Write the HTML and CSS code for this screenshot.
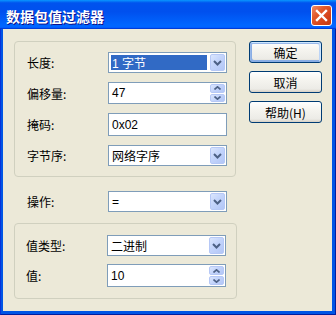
FILE: index.html
```html
<!DOCTYPE html>
<html lang="zh-CN">
<head>
    <meta charset="UTF-8">
    <title>数据包值过滤器</title>
    <link rel="stylesheet" href="styles.css">
</head>
<body>
    <div class="window">
        <div class="titlebar">
            <span class="title">数据包值过滤器</span>
            <div class="close">
                <svg width="13" height="13" viewBox="0 0 13 13"><path d="M2 2L11 11M11 2L2 11" stroke="#fff" stroke-width="2.4" stroke-linecap="square"/></svg>
            </div>
        </div>
        <div class="client">
            <div class="left">
                <div class="group g1">
                    <div class="row">
                        <span class="label">长度:</span>
                        <div class="field combo">
                            <span class="value sel">1 字节</span>
                            <span class="drop"><svg width="9" height="6" viewBox="0 0 9 6"><path d="M1 1L4.5 4.5L8 1" fill="none" stroke="#4d6185" stroke-width="2"/></svg></span>
                        </div>
                    </div>
                    <div class="row">
                        <span class="label">偏移量:</span>
                        <div class="field spin">
                            <span class="value">47</span>
                            <span class="arrows">
                                <span class="up"><svg width="7" height="4" viewBox="0 0 7 4"><path d="M0.5 3.5L3.5 0.8L6.5 3.5" fill="none" stroke="#4d6185" stroke-width="1.6"/></svg></span>
                                <span class="down"><svg width="7" height="4" viewBox="0 0 7 4"><path d="M0.5 0.5L3.5 3.2L6.5 0.5" fill="none" stroke="#4d6185" stroke-width="1.6"/></svg></span>
                            </span>
                        </div>
                    </div>
                    <div class="row">
                        <span class="label">掩码:</span>
                        <div class="field edit">
                            <span class="value">0x02</span>
                        </div>
                    </div>
                    <div class="row">
                        <span class="label">字节序:</span>
                        <div class="field combo">
                            <span class="value">网络字序</span>
                            <span class="drop"><svg width="9" height="6" viewBox="0 0 9 6"><path d="M1 1L4.5 4.5L8 1" fill="none" stroke="#4d6185" stroke-width="2"/></svg></span>
                        </div>
                    </div>
                </div>

                <div class="row op">
                    <span class="label">操作:</span>
                    <div class="field combo">
                        <span class="value">=</span>
                        <span class="drop"><svg width="9" height="6" viewBox="0 0 9 6"><path d="M1 1L4.5 4.5L8 1" fill="none" stroke="#4d6185" stroke-width="2"/></svg></span>
                    </div>
                </div>

                <div class="group g2">
                    <div class="row">
                        <span class="label">值类型:</span>
                        <div class="field combo">
                            <span class="value">二进制</span>
                            <span class="drop"><svg width="9" height="6" viewBox="0 0 9 6"><path d="M1 1L4.5 4.5L8 1" fill="none" stroke="#4d6185" stroke-width="2"/></svg></span>
                        </div>
                    </div>
                    <div class="row">
                        <span class="label">值:</span>
                        <div class="field spin tall">
                            <span class="value">10</span>
                            <span class="arrows">
                                <span class="up"><svg width="7" height="4" viewBox="0 0 7 4"><path d="M0.5 3.5L3.5 0.8L6.5 3.5" fill="none" stroke="#4d6185" stroke-width="1.6"/></svg></span>
                                <span class="down"><svg width="7" height="4" viewBox="0 0 7 4"><path d="M0.5 0.5L3.5 3.2L6.5 0.5" fill="none" stroke="#4d6185" stroke-width="1.6"/></svg></span>
                            </span>
                        </div>
                    </div>
                </div>
            </div>

            <div class="buttons">
                <div class="btn default">确定</div>
                <div class="btn">取消</div>
                <div class="btn">帮助(H)</div>
            </div>
        </div>
    </div>
</body>
</html>
```

FILE: styles.css
```css
* {
    box-sizing: border-box;
}

body {
    margin: 0;
    font-family: "Liberation Sans", "Noto Sans CJK SC", sans-serif;
    font-size: 12px;
    background: #ece9d8;
}

.window {
    width: 336px;
    height: 315px;
    background: #0055e5;
    border-left: 1px solid #0831d9;
    border-right: 1px solid #001ea0;
    border-bottom: 1px solid #001ea0;
    display: flex;
    flex-direction: column;
}

.titlebar {
    height: 29px;
    padding: 2px 4px 0 6px;
    display: flex;
    align-items: center;
    justify-content: space-between;
    background: linear-gradient(180deg, #0997ff 0%, #0053ee 10%, #0050ee 40%, #0066ff 86%, #0066ff 92%, #005bff 95%, #003dd7 97%, #003dd7 100%);
    margin: 0 -1px;
}

.title {
    color: #fff;
    font-family: "Noto Sans CJK SC", sans-serif;
    font-weight: bold;
    font-size: 14px;
    letter-spacing: 0px;
    text-shadow: 1px 1px #0f1089;
}

.close {
    width: 21px;
    height: 21px;
    border: 1px solid #fff;
    border-radius: 3px;
    background: radial-gradient(circle at 90% 90%, #cc4600 0%, #dc6527 55%, #cd7546 70%, #ffccb2 90%, #fff 100%);
    background: linear-gradient(135deg, #f08b6a 0%, #e25a2c 35%, #d4421a 70%, #c13a14 100%);
    display: flex;
    align-items: center;
    justify-content: center;
}

.client {
    flex: 1;
    margin: 0 3px 3px 2px;
    background: #ece9d8;
    padding: 12px 0 0 11px;
    display: flex;
    gap: 12px;
}

.left {
    width: 223px;
}

.group {
    border: 1px solid #d0d0bf;
    border-radius: 4px;
    display: flex;
    flex-direction: column;
}

.g1 {
    width: 222px;
    padding: 10px 8px 10px 12px;
    gap: 9px;
}

.g2 {
    width: 223px;
    padding: 11px 10px 11px 11px;
    gap: 8px;
}

.row {
    display: flex;
    align-items: center;
}

.label {
    width: 81px;
    flex: none;
    font-family: "Noto Sans CJK SC", sans-serif;
    font-size: 12px;
    color: #000;
}

.op {
    margin: 14px 0 11px;
    padding-left: 13px;
}

.field {
    width: 119px;
    height: 21px;
    border: 1px solid #7f9db9;
    background: #fff;
    display: flex;
    align-items: stretch;
    padding: 1px;
    position: relative;
}

.field.spin {
    height: 22px;
}

.field.edit {
    height: 23px;
}

.field.tall {
    height: 23px;
}

.value {
    flex: 1;
    display: flex;
    align-items: center;
    padding-left: 2px;
    font-family: "Liberation Sans", "Noto Sans CJK SC", sans-serif;
    font-size: 12px;
    color: #000;
    white-space: nowrap;
}

.value.sel {
    background: #316ac5;
    color: #fff;
    margin: 1px 3px 1px 1px;
    padding-left: 1px;
}

.drop {
    width: 15px;
    flex: none;
    border: 1px solid #b6c8f6;
    border-radius: 2px;
    background: linear-gradient(135deg, #dbe6fd 0%, #c3d4fb 45%, #b2c6f6 100%);
    display: flex;
    align-items: center;
    justify-content: center;
}

.arrows {
    width: 15px;
    flex: none;
    display: flex;
    flex-direction: column;
    gap: 1px;
}

.arrows span {
    flex: 1;
    border: 1px solid #b6c8f6;
    border-radius: 2px;
    background: linear-gradient(135deg, #dbe6fd 0%, #c3d4fb 45%, #b2c6f6 100%);
    display: flex;
    align-items: center;
    justify-content: center;
}

.buttons {
    display: flex;
    flex-direction: column;
    gap: 8px;
}

.btn {
    width: 73px;
    height: 22px;
    border: 1px solid #003c74;
    border-radius: 3px;
    background: linear-gradient(180deg, #fff 0%, #f5f4ef 40%, #ecebe6 85%, #d6d0c5 100%);
    display: flex;
    align-items: center;
    justify-content: center;
    font-family: "Noto Sans CJK SC", sans-serif;
    font-size: 12px;
    color: #000;
}

.btn.default {
    box-shadow: inset -1px 1px #cee7ff, inset 1px 2px #98b8ea, inset -2px 2px #bcd4f6, inset 1px -1px #89ade4, inset 2px -2px #89ade4;
}
```
